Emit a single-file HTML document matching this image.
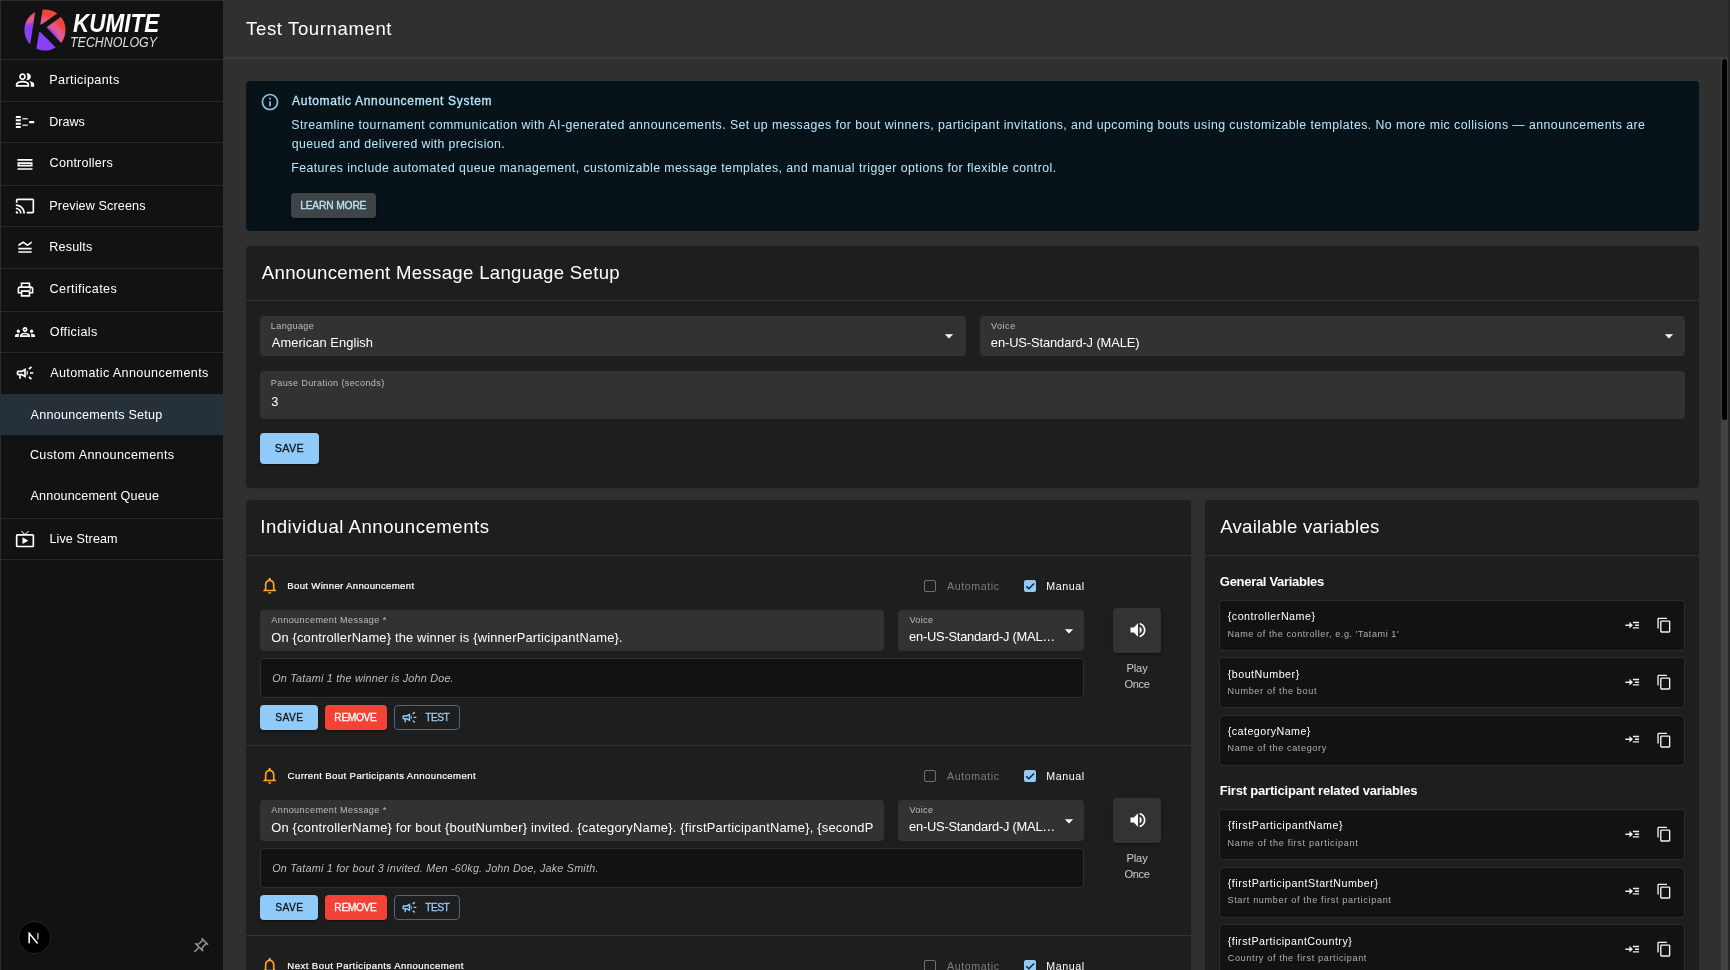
<!DOCTYPE html>
<html lang="en">
<head>
<meta charset="utf-8">
<title>Test Tournament - Announcements Setup</title>
<style>
*{box-sizing:border-box;margin:0;padding:0}
html,body{width:1730px;height:970px;overflow:hidden;background:#303030;font-family:"Liberation Sans",sans-serif;color:#fff}
#root{position:absolute;left:0;top:0;width:1730px;height:970px;overflow:hidden;will-change:transform}
#root div,#root svg,#root span{position:absolute;display:block}
#root span{white-space:nowrap}
</style>
</head>
<body>
<div id="root">
<aside>
<div style="left:0px;top:0px;width:223px;height:970px;background:#121212;border-left:1px solid #2c2c2c;border-top:1px solid #2c2c2c"></div>
<div style="left:1px;top:59px;width:222px;height:1px;background:#282828"></div>
<div style="left:1px;top:101px;width:222px;height:1px;background:#282828"></div>
<div style="left:1px;top:142px;width:222px;height:1px;background:#282828"></div>
<div style="left:1px;top:185px;width:222px;height:1px;background:#282828"></div>
<div style="left:1px;top:226px;width:222px;height:1px;background:#282828"></div>
<div style="left:1px;top:268px;width:222px;height:1px;background:#282828"></div>
<div style="left:1px;top:311px;width:222px;height:1px;background:#282828"></div>
<div style="left:1px;top:352px;width:222px;height:1px;background:#282828"></div>
<div style="left:1px;top:518px;width:222px;height:1px;background:#282828"></div>
<div style="left:1px;top:559px;width:222px;height:1px;background:#282828"></div>
<div style="left:1px;top:394px;width:222px;height:40.5px;background:#263038"></div>
<svg viewBox="0 0 44 44" style="left:22.9px;top:8.1px;width:44px;height:44px">
<defs><radialGradient id="lg" gradientUnits="userSpaceOnUse" cx="10.7" cy="42.7" r="40"><stop offset="0" stop-color="#8a3ffc"/><stop offset="0.64" stop-color="#8a3ffc"/><stop offset="0.73" stop-color="#df5890"/><stop offset="0.84" stop-color="#e2598a"/><stop offset="0.92" stop-color="#f0453a"/><stop offset="1" stop-color="#f0453a"/></radialGradient></defs>
<circle cx="22" cy="22" r="20.6" fill="url(#lg)"/>
<path fill="#121212" d="M12.840 0L19.860 0L12.870 44L5.970 44ZM18.480 16.400L40 1.450L43 4.900L23.570 19.350ZM23.570 19.350L41.570 38.700L37.570 44.340L17.570 24.340ZM17 16.400L18.480 16.400L23.570 19.350L17.570 24.340L15.500 24.340Z"/>
</svg>
<span style="left:73.45px;top:8.00px;font-size:25px;line-height:31px;color:#fff;font-weight:700;font-style:italic;transform:scaleX(0.8997);transform-origin:0 0;">KUMITE</span>
<span style="left:69.72px;top:32.00px;font-size:15.2px;line-height:19px;color:#dedede;font-style:italic;transform:scaleX(0.8184);transform-origin:0 0;">TECHNOLOGY</span>
<svg viewBox="0 0 24 24" style="left:15px;top:69.9px;width:20px;height:20px;"><path fill="#fff" d="M16.670 13.130C18.040 14.060 19 15.320 19 17v3h4v-3c0-2.180-3.570-3.470-6.330-3.870zM15 12c2.210 0 4-1.790 4-4s-1.790-4-4-4c-.470 0-.910.100-1.330.240C14.500 5.270 15 6.580 15 8s-.500 2.730-1.330 3.760c.420.140.860.240 1.330.240zM9 12c2.210 0 4-1.790 4-4s-1.790-4-4-4-4 1.790-4 4 1.790 4 4 4zm0-6c1.100 0 2 .900 2 2s-.900 2-2 2-2-.900-2-2 .900-2 2-2zM9 13c-2.670 0-8 1.340-8 4v3h16v-3c0-2.660-5.330-4-8-4zm6 5H3v-.990C3.200 16.290 6.300 15 9 15s5.800 1.290 6 2v1z"/></svg>
<svg viewBox="0 0 20 20" style="left:15px;top:112px;width:20px;height:20px"><path fill="#fff" d="M.8 4h5v2h-5zM.8 7.350h5v2h-5zM.8 10.700h5v2h-5zM.8 14.050h5v2h-5zM14.200 9h5v2.200h-5z"/><path fill="#fff" opacity=".8" d="M7.400 6h5.400v1.500H7.400zM7.400 12.600h5.400v1.500H7.400z"/></svg>
<svg viewBox="0 0 24 24" style="left:15px;top:153.6px;width:20px;height:20px;"><path fill="#fff" d="M3 17h18v2H3zm16-5v1H5v-1h14m2-2H3v5h18v-5zM3 6h18v2H3z"/></svg>
<svg viewBox="0 0 24 24" style="left:15px;top:195.8px;width:20px;height:20px;"><path fill="#fff" d="M21 3H3c-1.100 0-2 .900-2 2v3h2V5h18v14h-7v2h7c1.100 0 2-.900 2-2V5c0-1.100-.900-2-2-2zM1 18v3h3c0-1.660-1.340-3-3-3zm0-4v2c2.760 0 5 2.240 5 5h2c0-3.870-3.130-7-7-7zm0-4v2c4.970 0 9 4.030 9 9h2c0-6.080-4.930-11-11-11z"/></svg>
<svg viewBox="0 0 24 24" style="left:15px;top:237.35px;width:20px;height:20px;"><path fill="#fff" d="M20 15H4v-2h16v2zm0 2H4v2h16v-2zm-5-6 5-3.550V5l-5 3.550L10 5 4 8.660V11l5.920-3.610L15 11z"/></svg>
<svg viewBox="0 0 24 24" style="left:15.5px;top:280px;width:19px;height:19px;"><path fill="#fff" d="M19 8h-1V3H6v5H5c-1.660 0-3 1.340-3 3v6h4v4h12v-4h4v-6c0-1.660-1.340-3-3-3zM8 5h8v3H8V5zm8 12v2H8v-4h8v2zm2-2v-2H6v2H4v-4c0-.550.450-1 1-1h14c.550 0 1 .450 1 1v4h-2zM18 10.500a1 1 0 1 0 0 2 1 1 0 0 0 0-2z"/></svg>
<svg viewBox="0 0 24 24" style="left:15px;top:322px;width:20px;height:20px;"><path fill="#fff" d="M4 13c1.100 0 2-.900 2-2s-.900-2-2-2-2 .900-2 2 .900 2 2 2zm1.130 1.100c-.370-.060-.740-.100-1.130-.100-.990 0-1.930.210-2.780.580C.480 14.900 0 15.620 0 16.430V18h4.500v-1.610c0-.830.230-1.610.630-2.290zM20 13c1.100 0 2-.900 2-2s-.900-2-2-2-2 .900-2 2 .900 2 2 2zm4 3.430c0-.810-.480-1.530-1.220-1.850-.850-.370-1.790-.580-2.780-.580-.390 0-.760.040-1.130.100.400.680.630 1.460.630 2.290V18H24v-1.570zm-7.760-2.780c-1.170-.520-2.610-.900-4.240-.900-1.630 0-3.070.390-4.240.900C6.680 14.130 6 15.210 6 16.390V18h12v-1.610c0-1.180-.680-2.260-1.760-2.740zM8.070 16c.090-.230.130-.390.910-.690.970-.380 1.990-.560 3.020-.560s2.050.180 3.020.560c.770.300.810.460.910.690H8.070zM12 8c.550 0 1 .450 1 1s-.450 1-1 1-1-.450-1-1 .450-1 1-1m0-2c-1.660 0-3 1.340-3 3s1.340 3 3 3 3-1.340 3-3-1.340-3-3-3z"/></svg>
<svg viewBox="0 0 24 24" style="left:15px;top:363.2px;width:20px;height:20px;"><path fill="#fff" d="M18 11v2h4v-2h-4zm-2 6.610c.960.710 2.210 1.650 3.200 2.390.400-.530.800-1.070 1.200-1.600-.990-.740-2.240-1.680-3.200-2.400-.400.540-.800 1.080-1.200 1.610zM20.400 5.600c-.400-.530-.800-1.070-1.200-1.600-.990.740-2.240 1.680-3.200 2.400.400.530.800 1.070 1.200 1.600.960-.720 2.210-1.650 3.200-2.400zM4 9c-1.100 0-2 .900-2 2v2c0 1.100.900 2 2 2h1v4h2v-4h1l5 3V6L8 9H4zm5.030 1.710L11 9.530v4.940l-1.970-1.180-.480-.290H4v-2h4.550l.480-.290zM15.500 12c0-1.330-.580-2.530-1.500-3.350v6.690c.920-.810 1.500-2.010 1.500-3.340z"/></svg>
<svg viewBox="0 0 24 24" style="left:15px;top:529.3px;width:20px;height:20px;"><path fill="#fff" d="M21 6h-7.590l3.290-3.290L16 2l-4 4-4-4-.710.710L10.590 6H3c-1.100 0-2 .890-2 2v12c0 1.100.900 2 2 2h18c1.100 0 2-.900 2-2V8c0-1.110-.900-2-2-2zm0 14H3V8h18v12zM9 10v8l7-4z"/></svg>
<span style="left:49.32px;top:72.00px;font-size:12.6px;line-height:16px;color:#fff;letter-spacing:0.378px;">Participants</span>
<span style="left:49.32px;top:114.00px;font-size:12.6px;line-height:16px;color:#fff;letter-spacing:-0.033px;">Draws</span>
<span style="left:49.61px;top:155.00px;font-size:12.6px;line-height:16px;color:#fff;letter-spacing:0.225px;">Controllers</span>
<span style="left:49.32px;top:198.00px;font-size:12.6px;line-height:16px;color:#fff;letter-spacing:0.120px;">Preview Screens</span>
<span style="left:49.32px;top:239.00px;font-size:12.6px;line-height:16px;color:#fff;letter-spacing:0.161px;">Results</span>
<span style="left:49.61px;top:281.00px;font-size:12.6px;line-height:16px;color:#fff;letter-spacing:0.373px;">Certificates</span>
<span style="left:49.72px;top:324.00px;font-size:12.6px;line-height:16px;color:#fff;letter-spacing:0.375px;">Officials</span>
<span style="left:50.21px;top:365.00px;font-size:12.6px;line-height:16px;color:#fff;letter-spacing:0.378px;">Automatic Announcements</span>
<span style="left:30.57px;top:407.00px;font-size:12.6px;line-height:16px;color:#fff;letter-spacing:0.237px;">Announcements Setup</span>
<span style="left:29.88px;top:447.00px;font-size:12.6px;line-height:16px;color:#fff;letter-spacing:0.368px;">Custom Announcements</span>
<span style="left:30.57px;top:488.00px;font-size:12.6px;line-height:16px;color:#fff;letter-spacing:0.137px;">Announcement Queue</span>
<span style="left:49.41px;top:531.00px;font-size:12.6px;line-height:16px;color:#fff;letter-spacing:0.099px;">Live Stream</span>
<div style="left:18.9px;top:921.9px;width:31px;height:31px;background:#000;border-radius:50%;box-shadow:0 0 0 .7px #2a2a2a"></div>
<svg viewBox="0 0 13 13" style="left:28.4px;top:932.3px;width:11.8px;height:11.8px"><path d="M1.300 12.400V1.400L10.600 12.600" fill="none" stroke="#fff" stroke-width="1.700"/><path d="M10.900 1v7.200" stroke="#e0e0e0" stroke-width="1.300"/></svg>
<svg viewBox="0 0 24 24" style="left:189.55px;top:936.65px;width:19.3px;height:19.3px;transform:rotate(45deg);"><path fill="#8c8c8c" d="M14 4v5c0 1.120.370 2.160 1 3H9c.650-.860 1-1.900 1-3V4h4m3-2H7c-.550 0-1 .450-1 1s.450 1 1 1h1v5c0 1.660-1.340 3-3 3v2h5.970v7l1 1 1-1v-7H19v-2c-1.660 0-3-1.340-3-3V4h1c.550 0 1-.450 1-1s-.450-1-1-1z"/></svg>
</aside>
<header>
<div style="left:224px;top:57px;width:1506px;height:2px;background:linear-gradient(#37383a,#3d3e40)"></div>
<span style="left:246.12px;top:17.00px;font-size:18.6px;line-height:23px;color:#fff;letter-spacing:0.591px;">Test Tournament</span>
</header>
<nav>
<div style="left:1721px;top:59px;width:7px;height:911px;background:#414342"></div>
<div style="left:1722px;top:59px;width:5px;height:361.4px;background:#000;border-radius:2.500px"></div>
<div style="left:1728px;top:0px;width:2px;height:970px;background:#262626"></div>
</nav>
<main>
<section>
<div style="left:246px;top:81px;width:1453px;height:150px;background:#071318;border-radius:4px"></div>
<svg viewBox="0 0 24 24" style="left:260px;top:92.2px;width:20px;height:20px;"><path fill="#8fc4e0" d="M11 7h2v2h-2zm0 4h2v6h-2zm1-9C6.480 2 2 6.480 2 12s4.480 10 10 10 10-4.480 10-10S17.520 2 12 2zm0 18c-4.410 0-8-3.590-8-8s3.590-8 8-8 8 3.590 8 8-3.590 8-8 8z"/></svg>
<span style="left:292.08px;top:94.00px;font-size:12px;line-height:15px;color:#b8e7fb;-webkit-text-stroke:0.3px #b8e7fb;letter-spacing:0.693px;">Automatic Announcement System</span>
<span style="left:291.26px;top:118.00px;font-size:12.3px;line-height:15px;color:#b8e7fb;letter-spacing:0.453px;">Streamline tournament communication with AI-generated announcements. Set up messages for bout winners, participant invitations, and upcoming bouts using customizable templates. No more mic collisions — announcements are</span>
<span style="left:291.79px;top:137.00px;font-size:12.3px;line-height:15px;color:#b8e7fb;letter-spacing:0.377px;">queued and delivered with precision.</span>
<span style="left:291.19px;top:161.00px;font-size:12.3px;line-height:15px;color:#b8e7fb;letter-spacing:0.447px;">Features include automated queue management, customizable message templates, and manual trigger options for flexible control.</span>
<div style="left:291px;top:193px;width:85px;height:25px;background:#3f4446;border-radius:4px;box-shadow:0 3px 1px -2px rgba(0,0,0,.2),0 2px 2px 0 rgba(0,0,0,.14),0 1px 5px 0 rgba(0,0,0,.12);"></div>
<span style="left:300.14px;top:199.00px;font-size:10.3px;line-height:13px;color:#b8e7fb;-webkit-text-stroke:0.3px #b8e7fb;letter-spacing:-0.191px;">LEARN MORE</span>
</section>
<section>
<div style="left:246px;top:246px;width:1453px;height:241px;background:#1e1e1e;border-radius:4px;box-shadow:0 2px 1px -1px rgba(0,0,0,.2),0 1px 1px 0 rgba(0,0,0,.14),0 1px 3px 0 rgba(0,0,0,.12);"></div>
<span style="left:261.78px;top:261.00px;font-size:18.6px;line-height:23px;color:#fff;letter-spacing:0.310px;">Announcement Message Language Setup</span>
<div style="left:246px;top:300px;width:1453px;height:1px;background:#333"></div>
<div style="left:260px;top:316px;width:706px;height:40px;background:#323232;border-radius:4px"></div>
<span style="left:270.81px;top:321.00px;font-size:9.1px;line-height:11px;color:#bdbdbd;letter-spacing:0.366px;">Language</span>
<span style="left:271.78px;top:335.00px;font-size:12.9px;line-height:16px;color:#fff;letter-spacing:0.063px;">American English</span>
<svg viewBox="0 0 24 24" style="left:939.4px;top:326.3px;width:20px;height:20px;"><path fill="#fff" d="M7 10l5 5 5-5z"/></svg>
<div style="left:980px;top:316px;width:705px;height:40px;background:#323232;border-radius:4px"></div>
<span style="left:990.97px;top:321.00px;font-size:9.1px;line-height:11px;color:#bdbdbd;letter-spacing:0.497px;">Voice</span>
<span style="left:990.87px;top:335.00px;font-size:12.9px;line-height:16px;color:#fff;letter-spacing:-0.112px;">en-US-Standard-J (MALE)</span>
<svg viewBox="0 0 24 24" style="left:1658.7px;top:326.4px;width:20px;height:20px;"><path fill="#fff" d="M7 10l5 5 5-5z"/></svg>
<div style="left:260px;top:371px;width:1425px;height:48px;background:#323232;border-radius:4px"></div>
<span style="left:270.81px;top:378.00px;font-size:9.1px;line-height:11px;color:#bdbdbd;letter-spacing:0.359px;">Pause Duration (seconds)</span>
<span style="left:271.15px;top:394.00px;font-size:12.9px;line-height:16px;color:#fff;">3</span>
<div style="left:260px;top:433px;width:59px;height:31px;background:#90caf9;border-radius:4px;box-shadow:0 3px 1px -2px rgba(0,0,0,.2),0 2px 2px 0 rgba(0,0,0,.14),0 1px 5px 0 rgba(0,0,0,.12);"></div>
<span style="left:274.70px;top:441.00px;font-size:10.8px;line-height:14px;color:#0f151a;-webkit-text-stroke:0.3px #0f151a;letter-spacing:0.339px;">SAVE</span>
</section>
<section>
<div style="left:246px;top:500px;width:945px;height:480px;background:#1e1e1e;border-radius:4px;box-shadow:0 2px 1px -1px rgba(0,0,0,.2),0 1px 1px 0 rgba(0,0,0,.14),0 1px 3px 0 rgba(0,0,0,.12);"></div>
<span style="left:260.24px;top:515.00px;font-size:18.6px;line-height:23px;color:#fff;letter-spacing:0.509px;">Individual Announcements</span>
<div style="left:246px;top:555px;width:945px;height:1px;background:#333"></div>
<svg viewBox="0 0 24 24" style="left:259.6px;top:575.9px;width:19.4px;height:19.4px;"><path fill="#ffa726" d="M12 22c1.100 0 2-.900 2-2h-4c0 1.100.890 2 2 2zm6-6v-5c0-3.070-1.640-5.640-4.500-6.320V4c0-.830-.670-1.500-1.500-1.500s-1.500.670-1.500 1.500v.680C7.630 5.360 6 7.920 6 11v5l-2 2v1h16v-1l-2-2zm-2 1H8v-6c0-2.480 1.510-4.500 4-4.500s4 2.020 4 4.500v6z"/></svg>
<span style="left:287.31px;top:580.00px;font-size:9.6px;line-height:12px;color:#fff;-webkit-text-stroke:0.2px #fff;letter-spacing:0.317px;">Bout Winner Announcement</span>
<div style="left:924.3px;top:580.2px;width:12.2px;height:12.2px;border:1.500px solid #707070;border-radius:2px"></div>
<span style="left:947.07px;top:580.00px;font-size:10.7px;line-height:13px;color:#7c7c7c;letter-spacing:0.559px;">Automatic</span>
<div style="left:1024.3px;top:580.2px;width:12.2px;height:12.2px;background:#90caf9;border-radius:2px"><svg viewBox="0 0 24 24" style="display:block;width:12.200px;height:12.200px"><path d="M4.500 12.300l5 5L19.800 6.800" fill="none" stroke="#1e1e1e" stroke-width="2.700"/></svg></div>
<span style="left:1046.35px;top:580.00px;font-size:10.7px;line-height:13px;color:#fff;letter-spacing:0.562px;">Manual</span>
<div style="left:260px;top:610px;width:624px;height:41px;background:#323232;border-radius:4px"></div>
<span style="left:271.29px;top:615.00px;font-size:9.1px;line-height:11px;color:#bdbdbd;letter-spacing:0.393px;">Announcement Message *</span>
<span style="left:271.19px;top:630.00px;font-size:12.9px;line-height:16px;color:#fff;letter-spacing:0.168px;width:602px;overflow:hidden;">On {controllerName} the winner is {winnerParticipantName}.</span>
<div style="left:898px;top:610px;width:186px;height:41px;background:#323232;border-radius:4px"></div>
<span style="left:909.50px;top:615.00px;font-size:9.1px;line-height:11px;color:#bdbdbd;letter-spacing:0.303px;">Voice</span>
<span style="left:909.07px;top:629.00px;font-size:12.9px;line-height:16px;color:#fff;letter-spacing:-0.238px;">en-US-Standard-J (MAL…</span>
<svg viewBox="0 0 24 24" style="left:1058.7px;top:621px;width:20px;height:20px;"><path fill="#fff" d="M7 10l5 5 5-5z"/></svg>
<div style="left:1113px;top:608px;width:48px;height:45px;background:#333;border-radius:4px;box-shadow:0 3px 1px -2px rgba(0,0,0,.2),0 2px 2px 0 rgba(0,0,0,.14),0 1px 5px 0 rgba(0,0,0,.12);"></div>
<svg viewBox="0 0 24 24" style="left:1127.5px;top:620.3px;width:20px;height:20px;"><path fill="#fff" d="M3 9v6h4l5 5V4L7 9H3zm13.500 3c0-1.770-1.020-3.290-2.500-4.030v8.050c1.480-.730 2.500-2.250 2.500-4.020zM14 3.230v2.060c2.890.860 5 3.540 5 6.710s-2.110 5.850-5 6.710v2.060c4.010-.910 7-4.490 7-8.770s-2.990-7.860-7-8.770z"/></svg>
<span style="left:1126.44px;top:661.00px;font-size:11.1px;line-height:14px;color:#cdcdcd;letter-spacing:-0.094px;">Play</span>
<span style="left:1124.51px;top:677.00px;font-size:11.1px;line-height:14px;color:#cdcdcd;letter-spacing:-0.337px;">Once</span>
<div style="left:260px;top:658px;width:824px;height:40px;background:#121212;border:1px solid #303030;border-radius:4px"></div>
<span style="left:272.18px;top:671.00px;font-size:10.8px;line-height:14px;color:#bdbdbd;font-style:italic;letter-spacing:0.212px;">On Tatami 1 the winner is John Doe.</span>
<div style="left:260px;top:705px;width:58px;height:25px;background:#90caf9;border-radius:4px;box-shadow:0 3px 1px -2px rgba(0,0,0,.2),0 2px 2px 0 rgba(0,0,0,.14),0 1px 5px 0 rgba(0,0,0,.12);"></div>
<span style="left:275.37px;top:711.00px;font-size:10.2px;line-height:13px;color:#0f151a;-webkit-text-stroke:0.3px #0f151a;letter-spacing:0.450px;">SAVE</span>
<div style="left:325px;top:705px;width:62px;height:25px;background:#f44336;border-radius:4px;box-shadow:0 3px 1px -2px rgba(0,0,0,.2),0 2px 2px 0 rgba(0,0,0,.14),0 1px 5px 0 rgba(0,0,0,.12);"></div>
<span style="left:334.37px;top:711.00px;font-size:10.2px;line-height:13px;color:#fff;-webkit-text-stroke:0.3px #fff;letter-spacing:-0.340px;">REMOVE</span>
<div style="left:394px;top:705px;width:66px;height:25px;border:1px solid #4a677f;border-radius:4px"></div>
<svg viewBox="0 0 24 24" style="left:401.4px;top:709.4px;width:16.8px;height:16.8px;"><path fill="#90caf9" d="M18 11v2h4v-2h-4zm-2 6.610c.960.710 2.210 1.650 3.200 2.390.400-.530.800-1.070 1.200-1.600-.990-.740-2.240-1.680-3.200-2.400-.400.540-.800 1.080-1.200 1.610zM20.400 5.600c-.400-.530-.800-1.070-1.200-1.600-.990.740-2.240 1.680-3.200 2.400.400.530.800 1.070 1.200 1.600.960-.720 2.210-1.650 3.200-2.400zM4 9c-1.100 0-2 .900-2 2v2c0 1.100.900 2 2 2h1v4h2v-4h1l5 3V6L8 9H4zm5.030 1.710L11 9.530v4.940l-1.970-1.180-.480-.290H4v-2h4.550l.480-.290zM15.500 12c0-1.330-.580-2.530-1.500-3.350v6.690c.920-.810 1.500-2.010 1.500-3.340z"/></svg>
<span style="left:425.37px;top:711.00px;font-size:10.2px;line-height:13px;color:#90caf9;-webkit-text-stroke:0.3px #90caf9;letter-spacing:-0.579px;">TEST</span>
<div style="left:246px;top:745px;width:945px;height:1px;background:#333"></div>
<svg viewBox="0 0 24 24" style="left:259.6px;top:765.9px;width:19.4px;height:19.4px;"><path fill="#ffa726" d="M12 22c1.100 0 2-.900 2-2h-4c0 1.100.890 2 2 2zm6-6v-5c0-3.070-1.640-5.640-4.500-6.320V4c0-.830-.670-1.500-1.500-1.500s-1.500.670-1.500 1.500v.680C7.630 5.360 6 7.920 6 11v5l-2 2v1h16v-1l-2-2zm-2 1H8v-6c0-2.480 1.510-4.500 4-4.500s4 2.020 4 4.500v6z"/></svg>
<span style="left:287.62px;top:770.00px;font-size:9.6px;line-height:12px;color:#fff;-webkit-text-stroke:0.2px #fff;letter-spacing:0.381px;">Current Bout Participants Announcement</span>
<div style="left:924.3px;top:770.2px;width:12.2px;height:12.2px;border:1.500px solid #707070;border-radius:2px"></div>
<span style="left:947.07px;top:770.00px;font-size:10.7px;line-height:13px;color:#7c7c7c;letter-spacing:0.559px;">Automatic</span>
<div style="left:1024.3px;top:770.2px;width:12.2px;height:12.2px;background:#90caf9;border-radius:2px"><svg viewBox="0 0 24 24" style="display:block;width:12.200px;height:12.200px"><path d="M4.500 12.300l5 5L19.800 6.800" fill="none" stroke="#1e1e1e" stroke-width="2.700"/></svg></div>
<span style="left:1046.35px;top:770.00px;font-size:10.7px;line-height:13px;color:#fff;letter-spacing:0.562px;">Manual</span>
<div style="left:260px;top:800px;width:624px;height:41px;background:#323232;border-radius:4px"></div>
<span style="left:271.29px;top:805.00px;font-size:9.1px;line-height:11px;color:#bdbdbd;letter-spacing:0.393px;">Announcement Message *</span>
<span style="left:271.19px;top:820.00px;font-size:12.9px;line-height:16px;color:#fff;letter-spacing:0.214px;width:602px;overflow:hidden;">On {controllerName} for bout {boutNumber} invited. {categoryName}. {firstParticipantName}, {secondParticipantName}.</span>
<div style="left:898px;top:800px;width:186px;height:41px;background:#323232;border-radius:4px"></div>
<span style="left:909.50px;top:805.00px;font-size:9.1px;line-height:11px;color:#bdbdbd;letter-spacing:0.303px;">Voice</span>
<span style="left:909.07px;top:819.00px;font-size:12.9px;line-height:16px;color:#fff;letter-spacing:-0.238px;">en-US-Standard-J (MAL…</span>
<svg viewBox="0 0 24 24" style="left:1058.7px;top:811px;width:20px;height:20px;"><path fill="#fff" d="M7 10l5 5 5-5z"/></svg>
<div style="left:1113px;top:798px;width:48px;height:45px;background:#333;border-radius:4px;box-shadow:0 3px 1px -2px rgba(0,0,0,.2),0 2px 2px 0 rgba(0,0,0,.14),0 1px 5px 0 rgba(0,0,0,.12);"></div>
<svg viewBox="0 0 24 24" style="left:1127.5px;top:810.3px;width:20px;height:20px;"><path fill="#fff" d="M3 9v6h4l5 5V4L7 9H3zm13.500 3c0-1.770-1.020-3.290-2.500-4.030v8.050c1.480-.730 2.500-2.250 2.500-4.020zM14 3.230v2.060c2.890.860 5 3.540 5 6.710s-2.110 5.850-5 6.710v2.060c4.010-.910 7-4.490 7-8.770s-2.990-7.860-7-8.770z"/></svg>
<span style="left:1126.44px;top:851.00px;font-size:11.1px;line-height:14px;color:#cdcdcd;letter-spacing:-0.094px;">Play</span>
<span style="left:1124.51px;top:867.00px;font-size:11.1px;line-height:14px;color:#cdcdcd;letter-spacing:-0.337px;">Once</span>
<div style="left:260px;top:848px;width:824px;height:40px;background:#121212;border:1px solid #303030;border-radius:4px"></div>
<span style="left:272.18px;top:861.00px;font-size:10.8px;line-height:14px;color:#bdbdbd;font-style:italic;letter-spacing:0.212px;">On Tatami 1 for bout 3 invited. Men -60kg. John Doe, Jake Smith.</span>
<div style="left:260px;top:895px;width:58px;height:25px;background:#90caf9;border-radius:4px;box-shadow:0 3px 1px -2px rgba(0,0,0,.2),0 2px 2px 0 rgba(0,0,0,.14),0 1px 5px 0 rgba(0,0,0,.12);"></div>
<span style="left:275.37px;top:901.00px;font-size:10.2px;line-height:13px;color:#0f151a;-webkit-text-stroke:0.3px #0f151a;letter-spacing:0.450px;">SAVE</span>
<div style="left:325px;top:895px;width:62px;height:25px;background:#f44336;border-radius:4px;box-shadow:0 3px 1px -2px rgba(0,0,0,.2),0 2px 2px 0 rgba(0,0,0,.14),0 1px 5px 0 rgba(0,0,0,.12);"></div>
<span style="left:334.37px;top:901.00px;font-size:10.2px;line-height:13px;color:#fff;-webkit-text-stroke:0.3px #fff;letter-spacing:-0.340px;">REMOVE</span>
<div style="left:394px;top:895px;width:66px;height:25px;border:1px solid #4a677f;border-radius:4px"></div>
<svg viewBox="0 0 24 24" style="left:401.4px;top:899.4px;width:16.8px;height:16.8px;"><path fill="#90caf9" d="M18 11v2h4v-2h-4zm-2 6.610c.960.710 2.210 1.650 3.200 2.390.400-.530.800-1.070 1.200-1.600-.990-.740-2.240-1.680-3.200-2.400-.400.540-.800 1.080-1.200 1.610zM20.400 5.600c-.400-.530-.800-1.070-1.200-1.600-.990.740-2.240 1.680-3.200 2.400.400.530.800 1.070 1.200 1.600.960-.720 2.210-1.650 3.200-2.400zM4 9c-1.100 0-2 .900-2 2v2c0 1.100.900 2 2 2h1v4h2v-4h1l5 3V6L8 9H4zm5.030 1.710L11 9.530v4.940l-1.970-1.180-.480-.290H4v-2h4.550l.480-.290zM15.500 12c0-1.330-.580-2.530-1.500-3.350v6.690c.920-.810 1.500-2.010 1.500-3.340z"/></svg>
<span style="left:425.37px;top:901.00px;font-size:10.2px;line-height:13px;color:#90caf9;-webkit-text-stroke:0.3px #90caf9;letter-spacing:-0.579px;">TEST</span>
<div style="left:246px;top:935px;width:945px;height:1px;background:#333"></div>
<svg viewBox="0 0 24 24" style="left:259.6px;top:955.9px;width:19.4px;height:19.4px;"><path fill="#ffa726" d="M12 22c1.100 0 2-.900 2-2h-4c0 1.100.890 2 2 2zm6-6v-5c0-3.070-1.640-5.640-4.500-6.320V4c0-.830-.670-1.500-1.500-1.500s-1.500.670-1.500 1.500v.680C7.630 5.360 6 7.920 6 11v5l-2 2v1h16v-1l-2-2zm-2 1H8v-6c0-2.480 1.510-4.500 4-4.500s4 2.020 4 4.500v6z"/></svg>
<span style="left:287.34px;top:960.00px;font-size:9.6px;line-height:12px;color:#fff;-webkit-text-stroke:0.2px #fff;letter-spacing:0.424px;">Next Bout Participants Announcement</span>
<div style="left:924.3px;top:960.2px;width:12.2px;height:12.2px;border:1.500px solid #707070;border-radius:2px"></div>
<span style="left:947.07px;top:960.00px;font-size:10.7px;line-height:13px;color:#7c7c7c;letter-spacing:0.559px;">Automatic</span>
<div style="left:1024.3px;top:960.2px;width:12.2px;height:12.2px;background:#90caf9;border-radius:2px"><svg viewBox="0 0 24 24" style="display:block;width:12.200px;height:12.200px"><path d="M4.500 12.300l5 5L19.800 6.800" fill="none" stroke="#1e1e1e" stroke-width="2.700"/></svg></div>
<span style="left:1046.35px;top:960.00px;font-size:10.7px;line-height:13px;color:#fff;letter-spacing:0.562px;">Manual</span>
<div style="left:260px;top:990px;width:624px;height:41px;background:#323232;border-radius:4px"></div>
<span style="left:270.70px;top:995.00px;font-size:9.1px;line-height:11px;color:#bdbdbd;letter-spacing:0.418px;">Announcement Message *</span>
<span style="left:271.20px;top:1010.00px;font-size:12.9px;line-height:16px;color:#fff;letter-spacing:0.215px;width:602px;overflow:hidden;">On {controllerName} next bout {boutNumber} invited. {categoryName}.</span>
<div style="left:898px;top:990px;width:186px;height:41px;background:#323232;border-radius:4px"></div>
<span style="left:909.00px;top:995.00px;font-size:9.1px;line-height:11px;color:#bdbdbd;letter-spacing:0.503px;">Voice</span>
<span style="left:909.00px;top:1009.00px;font-size:12.9px;line-height:16px;color:#fff;letter-spacing:-0.241px;">en-US-Standard-J (MAL…</span>
<svg viewBox="0 0 24 24" style="left:1058.7px;top:1001px;width:20px;height:20px;"><path fill="#fff" d="M7 10l5 5 5-5z"/></svg>
<div style="left:1113px;top:988px;width:48px;height:45px;background:#333;border-radius:4px;box-shadow:0 3px 1px -2px rgba(0,0,0,.2),0 2px 2px 0 rgba(0,0,0,.14),0 1px 5px 0 rgba(0,0,0,.12);"></div>
<svg viewBox="0 0 24 24" style="left:1127.5px;top:1000.3px;width:20px;height:20px;"><path fill="#fff" d="M3 9v6h4l5 5V4L7 9H3zm13.500 3c0-1.770-1.020-3.290-2.500-4.030v8.050c1.480-.730 2.500-2.250 2.500-4.020zM14 3.230v2.060c2.890.860 5 3.540 5 6.710s-2.110 5.850-5 6.710v2.060c4.010-.910 7-4.490 7-8.770s-2.990-7.860-7-8.770z"/></svg>
<span style="left:1126.60px;top:1041.00px;font-size:11.1px;line-height:14px;color:#cdcdcd;letter-spacing:-0.111px;">Play</span>
<span style="left:1124.40px;top:1057.00px;font-size:11.1px;line-height:14px;color:#cdcdcd;letter-spacing:-0.149px;">Once</span>
<div style="left:260px;top:1038px;width:824px;height:40px;background:#121212;border:1px solid #303030;border-radius:4px"></div>
<span style="left:272.00px;top:1051.00px;font-size:10.8px;line-height:14px;color:#bdbdbd;font-style:italic;letter-spacing:0.212px;">On Tatami 1 next bout 4 invited.</span>
<div style="left:260px;top:1085px;width:58px;height:25px;background:#90caf9;border-radius:4px;box-shadow:0 3px 1px -2px rgba(0,0,0,.2),0 2px 2px 0 rgba(0,0,0,.14),0 1px 5px 0 rgba(0,0,0,.12);"></div>
<span style="left:275.70px;top:1091.00px;font-size:10.2px;line-height:13px;color:#0f151a;-webkit-text-stroke:0.3px #0f151a;letter-spacing:0.024px;">SAVE</span>
<div style="left:325px;top:1085px;width:62px;height:25px;background:#f44336;border-radius:4px;box-shadow:0 3px 1px -2px rgba(0,0,0,.2),0 2px 2px 0 rgba(0,0,0,.14),0 1px 5px 0 rgba(0,0,0,.12);"></div>
<span style="left:334.10px;top:1091.00px;font-size:10.2px;line-height:13px;color:#fff;-webkit-text-stroke:0.3px #fff;letter-spacing:-0.231px;">REMOVE</span>
<div style="left:394px;top:1085px;width:66px;height:25px;border:1px solid #4a677f;border-radius:4px"></div>
<svg viewBox="0 0 24 24" style="left:401.4px;top:1089.4px;width:16.8px;height:16.8px;"><path fill="#90caf9" d="M18 11v2h4v-2h-4zm-2 6.610c.960.710 2.210 1.650 3.200 2.390.400-.530.800-1.070 1.200-1.600-.990-.740-2.240-1.680-3.200-2.400-.400.540-.800 1.080-1.200 1.610zM20.400 5.600c-.400-.530-.800-1.070-1.200-1.600-.990.740-2.240 1.680-3.200 2.400.400.530.800 1.070 1.200 1.600.960-.720 2.210-1.650 3.200-2.400zM4 9c-1.100 0-2 .900-2 2v2c0 1.100.900 2 2 2h1v4h2v-4h1l5 3V6L8 9H4zm5.030 1.710L11 9.530v4.940l-1.970-1.180-.480-.290H4v-2h4.550l.480-.290zM15.500 12c0-1.330-.580-2.530-1.500-3.350v6.690c.920-.810 1.500-2.010 1.500-3.340z"/></svg>
<span style="left:424.80px;top:1091.00px;font-size:10.2px;line-height:13px;color:#90caf9;-webkit-text-stroke:0.3px #90caf9;letter-spacing:-0.138px;">TEST</span>
<div style="left:246px;top:1125px;width:945px;height:1px;background:#333"></div>
</section>
<section>
<div style="left:1205px;top:500px;width:494px;height:480px;background:#1e1e1e;border-radius:4px;box-shadow:0 2px 1px -1px rgba(0,0,0,.2),0 1px 1px 0 rgba(0,0,0,.14),0 1px 3px 0 rgba(0,0,0,.12);"></div>
<span style="left:1220.25px;top:515.00px;font-size:18.6px;line-height:23px;color:#fff;letter-spacing:0.243px;">Available variables</span>
<div style="left:1205px;top:555px;width:494px;height:1px;background:#333"></div>
<span style="left:1219.83px;top:574.00px;font-size:13px;line-height:16px;color:#fff;font-weight:700;letter-spacing:-0.302px;">General Variables</span>
<span style="left:1219.69px;top:783.00px;font-size:13px;line-height:16px;color:#fff;font-weight:700;letter-spacing:-0.195px;">First participant related variables</span>
<div style="left:1219px;top:600px;width:465.5px;height:51px;background:#121212;border:1px solid #2c2c2c;border-radius:4px"></div>
<span style="left:1227.70px;top:610.00px;font-size:10.7px;line-height:13px;color:#fff;letter-spacing:0.515px;">{controllerName}</span>
<span style="left:1227.46px;top:629.00px;font-size:9.1px;line-height:11px;color:#b0b0b0;letter-spacing:0.572px;">Name of the controller, e.g. 'Tatami 1'</span>
<svg viewBox="0 0 24 24" style="left:1623.5px;top:616.5px;width:16.4px;height:16.4px;"><path fill="#ededed" d="M13 7h9v2h-9zM13 15h9v2h-9zM16 11h6v2h-6zM13 12 8 7v4H2v2h6v4z"/></svg>
<svg viewBox="0 0 24 24" style="left:1655.5px;top:616.8px;width:16.4px;height:16.4px;"><path fill="#f2f2f2" d="M16 1H4c-1.100 0-2 .900-2 2v14h2V3h12V1zm3 4H8c-1.100 0-2 .900-2 2v14c0 1.100.900 2 2 2h11c1.100 0 2-.900 2-2V7c0-1.100-.900-2-2-2zm0 16H8V7h11v14z"/></svg>
<div style="left:1219px;top:657.3px;width:465.5px;height:51px;background:#121212;border:1px solid #2c2c2c;border-radius:4px"></div>
<span style="left:1227.70px;top:668.00px;font-size:10.7px;line-height:13px;color:#fff;letter-spacing:0.506px;">{boutNumber}</span>
<span style="left:1227.46px;top:686.00px;font-size:9.1px;line-height:11px;color:#b0b0b0;letter-spacing:0.661px;">Number of the bout</span>
<svg viewBox="0 0 24 24" style="left:1623.5px;top:673.8px;width:16.4px;height:16.4px;"><path fill="#ededed" d="M13 7h9v2h-9zM13 15h9v2h-9zM16 11h6v2h-6zM13 12 8 7v4H2v2h6v4z"/></svg>
<svg viewBox="0 0 24 24" style="left:1655.5px;top:674.0999999999999px;width:16.4px;height:16.4px;"><path fill="#f2f2f2" d="M16 1H4c-1.100 0-2 .900-2 2v14h2V3h12V1zm3 4H8c-1.100 0-2 .900-2 2v14c0 1.100.900 2 2 2h11c1.100 0 2-.900 2-2V7c0-1.100-.900-2-2-2zm0 16H8V7h11v14z"/></svg>
<div style="left:1219px;top:714.7px;width:465.5px;height:51px;background:#121212;border:1px solid #2c2c2c;border-radius:4px"></div>
<span style="left:1227.70px;top:725.00px;font-size:10.7px;line-height:13px;color:#fff;letter-spacing:0.470px;">{categoryName}</span>
<span style="left:1227.46px;top:743.00px;font-size:9.1px;line-height:11px;color:#b0b0b0;letter-spacing:0.622px;">Name of the category</span>
<svg viewBox="0 0 24 24" style="left:1623.5px;top:731.2px;width:16.4px;height:16.4px;"><path fill="#ededed" d="M13 7h9v2h-9zM13 15h9v2h-9zM16 11h6v2h-6zM13 12 8 7v4H2v2h6v4z"/></svg>
<svg viewBox="0 0 24 24" style="left:1655.5px;top:731.5px;width:16.4px;height:16.4px;"><path fill="#f2f2f2" d="M16 1H4c-1.100 0-2 .900-2 2v14h2V3h12V1zm3 4H8c-1.100 0-2 .900-2 2v14c0 1.100.900 2 2 2h11c1.100 0 2-.900 2-2V7c0-1.100-.900-2-2-2zm0 16H8V7h11v14z"/></svg>
<div style="left:1219px;top:809px;width:465.5px;height:51px;background:#121212;border:1px solid #2c2c2c;border-radius:4px"></div>
<span style="left:1227.70px;top:819.00px;font-size:10.7px;line-height:13px;color:#fff;letter-spacing:0.543px;">{firstParticipantName}</span>
<span style="left:1227.46px;top:838.00px;font-size:9.1px;line-height:11px;color:#b0b0b0;letter-spacing:0.683px;">Name of the first participant</span>
<svg viewBox="0 0 24 24" style="left:1623.5px;top:825.5px;width:16.4px;height:16.4px;"><path fill="#ededed" d="M13 7h9v2h-9zM13 15h9v2h-9zM16 11h6v2h-6zM13 12 8 7v4H2v2h6v4z"/></svg>
<svg viewBox="0 0 24 24" style="left:1655.5px;top:825.8px;width:16.4px;height:16.4px;"><path fill="#f2f2f2" d="M16 1H4c-1.100 0-2 .900-2 2v14h2V3h12V1zm3 4H8c-1.100 0-2 .900-2 2v14c0 1.100.900 2 2 2h11c1.100 0 2-.900 2-2V7c0-1.100-.900-2-2-2zm0 16H8V7h11v14z"/></svg>
<div style="left:1219px;top:866.5px;width:465.5px;height:51px;background:#121212;border:1px solid #2c2c2c;border-radius:4px"></div>
<span style="left:1227.70px;top:877.00px;font-size:10.7px;line-height:13px;color:#fff;letter-spacing:0.530px;">{firstParticipantStartNumber}</span>
<span style="left:1227.43px;top:895.00px;font-size:9.1px;line-height:11px;color:#b0b0b0;letter-spacing:0.666px;">Start number of the first participant</span>
<svg viewBox="0 0 24 24" style="left:1623.5px;top:883.0px;width:16.4px;height:16.4px;"><path fill="#ededed" d="M13 7h9v2h-9zM13 15h9v2h-9zM16 11h6v2h-6zM13 12 8 7v4H2v2h6v4z"/></svg>
<svg viewBox="0 0 24 24" style="left:1655.5px;top:883.3px;width:16.4px;height:16.4px;"><path fill="#f2f2f2" d="M16 1H4c-1.100 0-2 .900-2 2v14h2V3h12V1zm3 4H8c-1.100 0-2 .900-2 2v14c0 1.100.900 2 2 2h11c1.100 0 2-.900 2-2V7c0-1.100-.900-2-2-2zm0 16H8V7h11v14z"/></svg>
<div style="left:1219px;top:924.3px;width:465.5px;height:51px;background:#121212;border:1px solid #2c2c2c;border-radius:4px"></div>
<span style="left:1227.70px;top:935.00px;font-size:10.7px;line-height:13px;color:#fff;letter-spacing:0.494px;">{firstParticipantCountry}</span>
<span style="left:1227.71px;top:953.00px;font-size:9.1px;line-height:11px;color:#b0b0b0;letter-spacing:0.642px;">Country of the first participant</span>
<svg viewBox="0 0 24 24" style="left:1623.5px;top:940.8px;width:16.4px;height:16.4px;"><path fill="#ededed" d="M13 7h9v2h-9zM13 15h9v2h-9zM16 11h6v2h-6zM13 12 8 7v4H2v2h6v4z"/></svg>
<svg viewBox="0 0 24 24" style="left:1655.5px;top:941.0999999999999px;width:16.4px;height:16.4px;"><path fill="#f2f2f2" d="M16 1H4c-1.100 0-2 .900-2 2v14h2V3h12V1zm3 4H8c-1.100 0-2 .900-2 2v14c0 1.100.900 2 2 2h11c1.100 0 2-.900 2-2V7c0-1.100-.900-2-2-2zm0 16H8V7h11v14z"/></svg>
</section>
</main>
</div>
</body>
</html>
